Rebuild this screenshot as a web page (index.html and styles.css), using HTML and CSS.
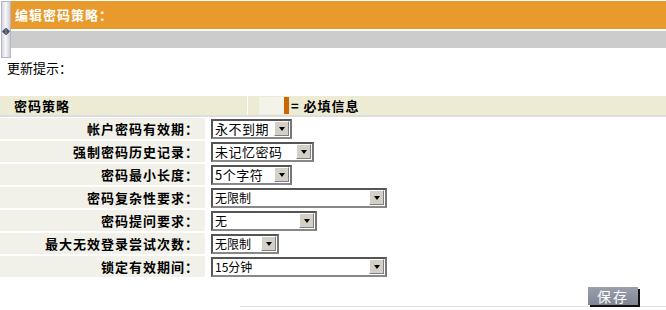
FILE: index.html
```html
<!DOCTYPE html>
<html>
<head>
<meta charset="utf-8">
<link rel="stylesheet" href="styles.css">
</head>
<body>
<div class="top">
  <div class="strip">
    <svg class="arrow" width="8" height="7" viewBox="0 0 8 7"><polygon points="0,3.5 3,0.5 3,6.5" fill="#4a5068"/><polygon points="8,3.5 5,0.5 5,6.5" fill="#4a5068"/><rect x="3" y="0" width="2" height="7" fill="#6a7088"/></svg>
  </div>
  <div class="head">
    <div class="title">编辑密码策略：</div>
    <div class="subbar"></div>
  </div>
</div>
<div class="notice">更新提示：</div>
<div class="section">
  <div class="sec-name">密码策略</div>
  <div class="sec-req"><span class="sq"></span><span class="bar"></span><span class="req-text">= 必填信息</span></div>
</div>
<div class="rows">
  <div class="row"><div class="lbl">帐户密码有效期：</div><div class="val"><div class="sel w80"><span class="opt">永不到期</span><span class="btn"><i></i></span></div></div></div>
  <div class="row"><div class="lbl">强制密码历史记录：</div><div class="val"><div class="sel w102"><span class="opt">未记忆密码</span><span class="btn"><i></i></span></div></div></div>
  <div class="row"><div class="lbl">密码最小长度：</div><div class="val"><div class="sel w80"><span class="opt">5个字符</span><span class="btn"><i></i></span></div></div></div>
  <div class="row"><div class="lbl">密码复杂性要求：</div><div class="val"><div class="sel w176"><span class="opt thin">无限制</span><span class="btn"><i></i></span></div></div></div>
  <div class="row"><div class="lbl">密码提问要求：</div><div class="val"><div class="sel w105"><span class="opt thin">无</span><span class="btn"><i></i></span></div></div></div>
  <div class="row"><div class="lbl">最大无效登录尝试次数：</div><div class="val"><div class="sel w68"><span class="opt thin">无限制</span><span class="btn"><i></i></span></div></div></div>
  <div class="row"><div class="lbl">锁定有效期间：</div><div class="val"><div class="sel w176"><span class="opt thin">15分钟</span><span class="btn"><i></i></span></div></div></div>
</div>
<div class="actions"><span class="save">保存</span></div>
<div class="foot-line"></div>
</body>
</html>
```
FILE: styles.css
```css
html, body {
  margin: 0;
  padding: 0;
  background: #fff;
  font-family: "Noto Sans CJK SC", "DejaVu Sans", sans-serif;
  color: #000;
  width: 666px;
  height: 310px;
  overflow: hidden;
}
.top {
  display: flex;
  align-items: flex-start;
  margin-top: 1px;
}
.strip {
  width: 8px;
  height: 55px;
  margin-left: 1px;
  border: 1px solid #b4b4cc;
  background: linear-gradient(to right, #d6d6dc, #f8f8fa 45%, #e6e6ea 70%, #cfcfd6);
  display: flex;
  flex-direction: column;
  align-items: center;
  justify-content: center;
}
.arrow {
  display: block;
  margin-top: 3px;
}
.head {
  flex: 1;
}
.title {
  height: 28px;
  background: #e89a2c;
  color: #fff;
  font-weight: bold;
  font-size: 13px;
  letter-spacing: 1px;
  line-height: 28px;
  padding-left: 4px;
}
.subbar {
  height: 17px;
  margin-top: 2px;
  background: #cccccc;
}
.notice {
  margin-top: 3px;
  padding-left: 7px;
  font-size: 13px;
  line-height: 14px;
}
.section {
  margin-top: 21px;
  height: 19px;
  background: #edebd3;
  display: flex;
  border-bottom: 2px solid #dedede;
}
.sec-name {
  width: 233px;
  padding-left: 14px;
  font-size: 13px;
  font-weight: bold;
  letter-spacing: 1px;
  line-height: 19px;
  border-right: 1px solid #fff;
}
.sec-req {
  display: flex;
  align-items: center;
  padding-left: 11px;
}
.sq {
  width: 25px;
  height: 17px;
  background: #f4f3ea;
}
.bar {
  width: 5px;
  height: 17px;
  background: #cc6600;
}
.req-text {
  padding-left: 2px;
  font-size: 13px;
  font-weight: bold;
  letter-spacing: 1px;
  line-height: 19px;
}
.rows {
  display: flex;
  flex-direction: column;
}
.row {
  display: flex;
  height: 23px;
}
.lbl {
  width: 199px;
  height: 21px;
  padding-right: 6px;
  margin-top: 1px;
  background: #f2f1e9;
  text-align: right;
  font-size: 13px;
  font-weight: bold;
  letter-spacing: 1px;
  line-height: 21px;
  white-space: nowrap;
}
.val {
  padding-left: 6px;
  display: flex;
  align-items: center;
}
.sel {
  box-sizing: border-box;
  height: 20px;
  border-top: 2px solid #555;
  border-left: 2px solid #555;
  border-right: 2px solid #777;
  border-bottom: 2px solid #888;
  background: #fff;
  display: flex;
  align-items: center;
  justify-content: space-between;
}
.w80 { width: 81px; }
.w102 { width: 103px; }
.w176 { width: 176px; }
.w105 { width: 106px; }
.w68 { width: 68px; }
.opt {
  font-size: 13px;
  letter-spacing: 0.5px;
  line-height: 16px;
  padding-left: 2px;
  white-space: nowrap;
}
.opt.thin {
  font-size: 12px;
  letter-spacing: 0;
}
.btn {
  box-sizing: border-box;
  width: 15px;
  height: 15px;
  margin-right: 1px;
  background: #d4d0c8;
  border-top: 1px solid #fff;
  border-left: 1px solid #fff;
  border-right: 1px solid #808080;
  border-bottom: 1px solid #808080;
  display: flex;
  align-items: center;
  justify-content: center;
}
.btn i {
  display: block;
  width: 0;
  height: 0;
  border-left: 3.5px solid transparent;
  border-right: 3.5px solid transparent;
  border-top: 4px solid #000;
}
.actions {
  display: flex;
  justify-content: flex-end;
  padding-right: 28px;
  margin-top: 9px;
}
.save {
  width: 50px;
  height: 18px;
  background: linear-gradient(#9aa0ad, #7f8592);
  color: #fff;
  font-size: 14px;
  line-height: 18px;
  text-align: center;
  letter-spacing: 2px;
  box-shadow: 2px 2px 0 #111;
}
.foot-line {
  margin-left: 240px;
  margin-top: 1px;
  border-top: 1px solid #e3e3e3;
}
```
